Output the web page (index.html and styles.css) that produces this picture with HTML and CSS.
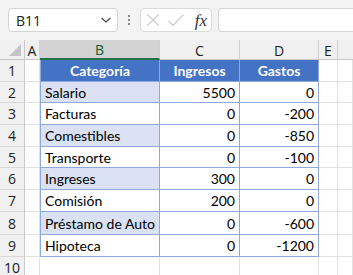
FILE: index.html
```html
<!DOCTYPE html>
<html>
<head>
<meta charset="utf-8">
<link rel="stylesheet" href="styles.css">
</head>
<body>
<div class="app">
  <div class="toolbar">
    <div class="namebox">
      <span class="name">B11</span>
      <svg class="chev" width="12" height="8" viewBox="0 0 12 8"><path d="M1.5 2 L6 6 L10.5 2" fill="none" stroke="#444" stroke-width="1.2"/></svg>
    </div>
    <div class="dots"><i></i><i></i><i></i></div>
    <div class="fxbox">
      <svg width="16" height="16" viewBox="0 0 16 16"><path d="M2 2 L14 14 M14 2 L2 14" stroke="#c8c8c8" stroke-width="1.2" fill="none"/></svg>
      <svg width="18" height="16" viewBox="0 0 18 16"><path d="M1.5 9 L6 13.5 L16.5 2.5" stroke="#c8c8c8" stroke-width="1.2" fill="none"/></svg>
      <span class="fx">fx</span>
    </div>
    <div class="formula"></div>
  </div>
  <div class="sheet">
    <div class="corner"><span class="tri"></span></div>
    <div class="ch">A</div>
    <div class="ch sel">B</div>
    <div class="ch">C</div>
    <div class="ch">D</div>
    <div class="ch">E</div>
    <div class="ch last"></div>

    <div class="rh">1</div><div class="c"></div>
    <div class="c th first">Categoría</div><div class="c th">Ingresos</div><div class="c th">Gastos</div>
    <div class="c"></div><div class="c"></div>

    <div class="rh">2</div><div class="c"></div>
    <div class="c t band">Salario</div><div class="c t num">5500</div><div class="c t num end">0</div>
    <div class="c"></div><div class="c"></div>

    <div class="rh">3</div><div class="c"></div>
    <div class="c t">Facturas</div><div class="c t num">0</div><div class="c t num end">-200</div>
    <div class="c"></div><div class="c"></div>

    <div class="rh">4</div><div class="c"></div>
    <div class="c t band">Comestibles</div><div class="c t num">0</div><div class="c t num end">-850</div>
    <div class="c"></div><div class="c"></div>

    <div class="rh">5</div><div class="c"></div>
    <div class="c t">Transporte</div><div class="c t num">0</div><div class="c t num end">-100</div>
    <div class="c"></div><div class="c"></div>

    <div class="rh">6</div><div class="c"></div>
    <div class="c t band">Ingreses</div><div class="c t num">300</div><div class="c t num end">0</div>
    <div class="c"></div><div class="c"></div>

    <div class="rh">7</div><div class="c"></div>
    <div class="c t">Comisión</div><div class="c t num">200</div><div class="c t num end">0</div>
    <div class="c"></div><div class="c"></div>

    <div class="rh">8</div><div class="c"></div>
    <div class="c t band">Préstamo de Auto</div><div class="c t num">0</div><div class="c t num end">-600</div>
    <div class="c"></div><div class="c"></div>

    <div class="rh">9</div><div class="c"></div>
    <div class="c t">Hipoteca</div><div class="c t num">0</div><div class="c t num end">-1200</div>
    <div class="c"></div><div class="c"></div>

    <div class="rh">10</div><div class="c"></div>
    <div class="c"></div><div class="c"></div><div class="c"></div>
    <div class="c"></div><div class="c"></div>
  </div>
</div>
</body>
</html>
```
FILE: styles.css
```css
* { box-sizing: border-box; }
html, body { margin: 0; padding: 0; background: #fff; }
.app { width: 353px; height: 275px; overflow: hidden; }

.toolbar {
  height: 40px;
  background: #f3f3f3;
  display: flex;
  align-items: flex-start;
  padding: 8px 0 0 8px;
  font-family: "Open Sans", "Noto Sans", sans-serif;
}
.namebox {
  width: 110px; height: 24px;
  background: #fff;
  border: 1px solid #d4d4d4;
  border-radius: 4px;
  display: flex; align-items: center; justify-content: space-between;
  padding: 0 5px 0 7px;
}
.name { font-size: 14px; color: #222; }
.dots {
  width: 22px; height: 24px;
  display: flex; flex-direction: column; align-items: center; justify-content: center; gap: 2px;
}
.dots i { display: block; width: 2px; height: 2px; background: #8a8a8a; }
.fxbox {
  width: 72px; height: 24px;
  background: #fff;
  border: 1px solid #dadada;
  border-radius: 4px;
  display: flex; align-items: center; gap: 6px;
  padding: 0 4px 0 4px;
}
.fx {
  font-family: "Liberation Serif", "DejaVu Serif", serif;
  font-style: italic; font-size: 17px; color: #333;
  margin-left: 4px; line-height: 1;
}
.formula {
  flex: 1; height: 24px; margin-left: 6px;
  background: #fff; border: 1px solid #d4d4d4; border-radius: 4px 0 0 4px;
  border-right: none;
}

.sheet {
  display: grid;
  grid-template-columns: 25px 15px 120px 80px 79px 19px 1fr;
  grid-template-rows: 20px 22px 21px 22px 22px 21px 22px 22px 23px 22px 22px;
  font-family: "Lato", "Carlito", sans-serif;
  font-size: 14px;
  color: #000;
}
.corner {
  background: #f0f0f0;
  border-right: 1px solid #c8c8c8;
  border-bottom: 1px solid #c8c8c8;
  position: relative;
}
.tri {
  position: absolute; right: 3px; bottom: 3px;
  width: 0; height: 0;
  border-left: 12px solid transparent;
  border-bottom: 12px solid #c4c4c4;
}
.ch {
  background: #f0f0f0;
  border-right: 1px solid #d0d0d0;
  border-bottom: 1px solid #c8c8c8;
  font-family: "Open Sans", "Noto Sans", sans-serif;
  font-size: 14px; color: #222;
  display: flex; align-items: center; justify-content: center;
  padding-top: 1px;
}
.ch.sel {
  background: #d3d3d3;
  color: #0f5c32;
  border-bottom: 2px solid #217346;
}
.ch.last { border-right: none; }
.rh {
  background: #f0f0f0;
  border-right: 1px solid #c8c8c8;
  border-bottom: 1px solid #d8d8d8;
  font-family: "Open Sans", "Noto Sans", sans-serif;
  font-size: 14px; color: #222;
  display: flex; align-items: center; justify-content: center;
}
.c {
  border-right: 1px solid #e1e1e1;
  border-bottom: 1px solid #e1e1e1;
  display: flex; align-items: center;
  padding: 0 4px;
  white-space: nowrap;
}
.th {
  background: #4472c4;
  color: #fff;
  font-weight: bold;
  justify-content: center;
  border-right: 1px solid #8ea9db;
  border-bottom: 1px solid #8ea9db;
}
.t {
  border-right: 1px solid #8ea9db;
  border-bottom: 1px solid #8ea9db;
}
.first, .t:not(.num) { box-shadow: inset 1px 0 0 #8ea9db; padding-left: 5px; }
.band { background: #d9e1f2; }
.num { justify-content: flex-end; }
```
